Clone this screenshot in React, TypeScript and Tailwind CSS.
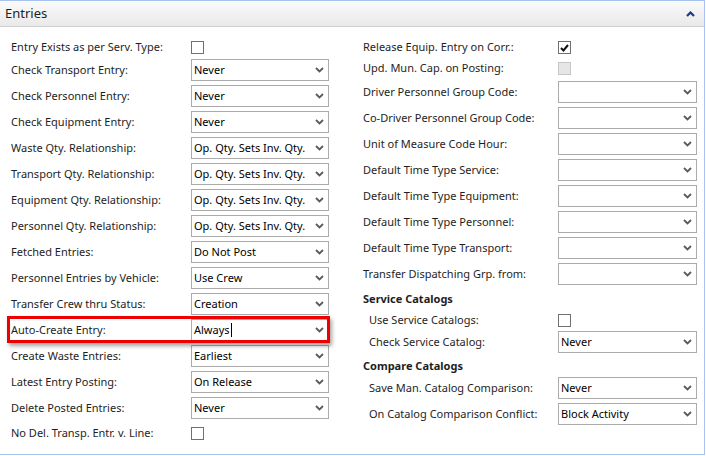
import React from "react";

type Row =
  | { kind: "select"; label: string; value?: string; mark?: boolean }
  | { kind: "check"; label: string; checked?: boolean; disabled?: boolean; h: string }
  | { kind: "head"; label: string; h: string };

const leftRows: Row[] = [
  { kind: "check", label: "Entry Exists as per Serv. Type:", h: "h-[20px]" },
  { kind: "select", label: "Check Transport Entry:", value: "Never" },
  { kind: "select", label: "Check Personnel Entry:", value: "Never" },
  { kind: "select", label: "Check Equipment Entry:", value: "Never" },
  { kind: "select", label: "Waste Qty. Relationship:", value: "Op. Qty. Sets Inv. Qty." },
  { kind: "select", label: "Transport Qty. Relationship:", value: "Op. Qty. Sets Inv. Qty." },
  { kind: "select", label: "Equipment Qty. Relationship:", value: "Op. Qty. Sets Inv. Qty." },
  { kind: "select", label: "Personnel Qty. Relationship:", value: "Op. Qty. Sets Inv. Qty." },
  { kind: "select", label: "Fetched Entries:", value: "Do Not Post" },
  { kind: "select", label: "Personnel Entries by Vehicle:", value: "Use Crew" },
  { kind: "select", label: "Transfer Crew thru Status:", value: "Creation" },
  { kind: "select", label: "Auto-Create Entry:", value: "Always", mark: true },
  { kind: "select", label: "Create Waste Entries:", value: "Earliest" },
  { kind: "select", label: "Latest Entry Posting:", value: "On Release" },
  { kind: "select", label: "Delete Posted Entries:", value: "Never" },
  { kind: "check", label: "No Del. Transp. Entr. v. Line:", h: "h-[24px]" },
];

const rightRows: Row[] = [
  { kind: "check", label: "Release Equip. Entry on Corr.:", checked: true, h: "h-[21px]" },
  { kind: "check", label: "Upd. Mun. Cap. on Posting:", disabled: true, h: "h-[21px]" },
  { kind: "select", label: "Driver Personnel Group Code:" },
  { kind: "select", label: "Co-Driver Personnel Group Code:" },
  { kind: "select", label: "Unit of Measure Code Hour:" },
  { kind: "select", label: "Default Time Type Service:" },
  { kind: "select", label: "Default Time Type Equipment:" },
  { kind: "select", label: "Default Time Type Personnel:" },
  { kind: "select", label: "Default Time Type Transport:" },
  { kind: "select", label: "Transfer Dispatching Grp. from:" },
  { kind: "head", label: "Service Catalogs", h: "h-[24px]" },
  { kind: "check", label: "Use Service Catalogs:", h: "h-[18px]" },
  { kind: "select", label: "Check Service Catalog:", value: "Never" },
  { kind: "head", label: "Compare Catalogs", h: "h-[20px] pt-[3px]" },
  { kind: "select", label: "Save Man. Catalog Comparison:", value: "Never" },
  { kind: "select", label: "On Catalog Comparison Conflict:", value: "Block Activity" },
];

function Chevron() {
  return (
    <svg width="9" height="6" viewBox="0 0 9 6" className="shrink-0">
      <path d="M1 1 L4.5 4.5 L8 1" fill="none" stroke="#5a5a5a" strokeWidth="1.8" />
    </svg>
  );
}

function Select({ value, width, caret }: { value?: string; width: string; caret?: boolean }) {
  return (
    <div className={`${width} h-[22px] border border-[#ababab] bg-white flex items-center pl-[2px] pr-[4px]`}>
      <span className="flex-1 text-black whitespace-nowrap flex items-center">
        {value}
        {caret && <span className="inline-block w-px h-[14px] bg-black ml-[1px]" />}
      </span>
      <Chevron />
    </div>
  );
}

function Check({ checked, disabled }: { checked?: boolean; disabled?: boolean }) {
  return (
    <div
      className={`w-[13px] h-[13px] border flex items-center justify-center ${
        disabled ? "border-[#c6c6c6] bg-[#e6e6e6]" : "border-[#707070] bg-white"
      }`}
    >
      {checked && (
        <svg width="9" height="8" viewBox="0 0 9 8">
          <path d="M1 4 L3.5 6.5 L8 1" fill="none" stroke="#111" strokeWidth="2" />
        </svg>
      )}
    </div>
  );
}

function Column({ rows, labelW, selectW, indent }: { rows: Row[]; labelW: string; selectW: string; indent?: boolean }) {
  return (
    <div className="flex flex-col">
      {rows.map((r, i) => {
        if (r.kind === "head") {
          return (
            <div key={i} className={`${r.h} flex items-center font-bold text-[#1e1e1e]`}>
              {r.label}
            </div>
          );
        }
        const sub = indent && i > 10;
        const body = (
          <div className={`flex items-center ${r.kind === "select" ? "h-[26px]" : r.h} ${sub ? "pl-[6px]" : ""}`}>
            <div className={`${sub ? "w-[189px]" : labelW} shrink-0 text-[#1e1e1e] whitespace-nowrap`}>{r.label}</div>
            {r.kind === "select" ? (
              <Select value={r.value} width={selectW} caret={r.mark} />
            ) : (
              <Check checked={r.checked} disabled={r.disabled} />
            )}
          </div>
        );
        if (r.kind === "select" && r.mark) {
          return (
            <div key={i} className="relative">
              {body}
              <div className="absolute left-[-4px] top-[-1px] w-[323px] h-[27px] border-[3px] border-[#ee0000] shadow-[2px_3px_4px_rgba(0,0,0,0.35)]" />
            </div>
          );
        }
        return <React.Fragment key={i}>{body}</React.Fragment>;
      })}
    </div>
  );
}

export default function App() {
  return (
    <div className="w-[706px] h-[456px] bg-white" style={{ fontFamily: '"Noto Sans", "Open Sans", sans-serif' }}>
      <div className="w-[705px] h-[455px] border-t border-[#a7c4ee] border-r border-r-[#a7c4ee] border-b border-b-[#a7c4ee] flex flex-col">
        <div className="h-[26px] border-b border-[#cfcfcf] bg-gradient-to-b from-[#fbfbfb] to-[#e9e9e9] flex items-center justify-between pl-[5px] pr-[9px]">
          <span className="text-[13px] text-[#1e1e1e]">Entries</span>
          <svg width="9" height="6" viewBox="0 0 9 6">
            <path d="M1 5 L4.5 1.5 L8 5" fill="none" stroke="#1b3a8c" strokeWidth="2.2" />
          </svg>
        </div>
        <div className="flex text-[11px] pt-[10px]">
          <div className="pl-[11px]">
            <Column rows={leftRows} labelW="w-[180px]" selectW="w-[138px]" />
          </div>
          <div className="pl-[34px]">
            <Column rows={rightRows} labelW="w-[195px]" selectW="w-[139px]" indent />
          </div>
        </div>
      </div>
    </div>
  );
}
